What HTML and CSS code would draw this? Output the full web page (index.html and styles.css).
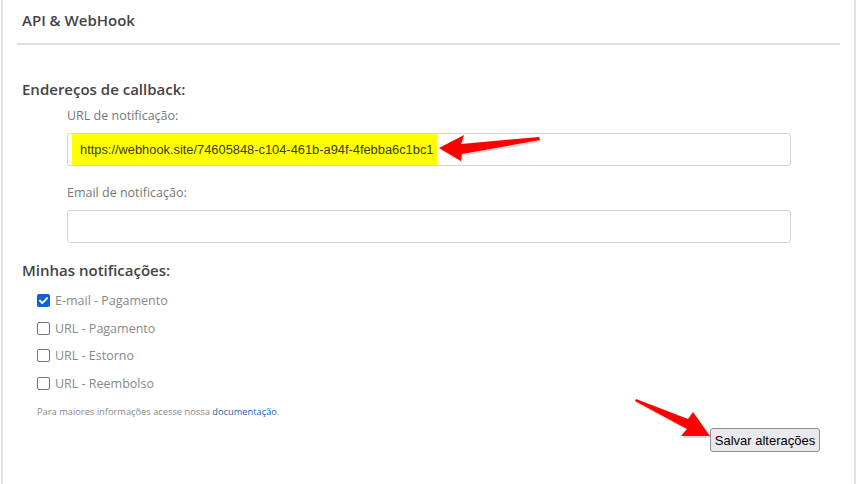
FILE: index.html
```html
<!DOCTYPE html>
<html lang="pt-BR">
<head>
    <meta charset="UTF-8">
    <meta name="viewport" content="width=device-width, initial-scale=1.0">
    <title>API &amp; WebHook</title>
    <link rel="stylesheet" href="styles.css">
</head>
<body>

    <div class="card">
        <!-- Cabeçalho do painel -->
        <div class="card-header">
            <h3>API &amp; WebHook</h3>
        </div>

        <div class="card-body">
            <h4 class="section-title">Endereços de callback:</h4>

            <div class="form-group">
                <label for="url-notif">URL de notificação:</label>
                <div class="input" id="url-notif">
                    <span class="marked">https://webhook.site/74605848-c104-461b-a94f-4febba6c1bc1</span>
                </div>
            </div>

            <div class="form-group">
                <label for="email-notif">Email de notificação:</label>
                <div class="input" id="email-notif"></div>
            </div>

            <h4 class="section-title second">Minhas notificações:</h4>

            <ul class="checks">
                <li><span class="box checked"><svg viewBox="0 0 13 13" width="13" height="13"><path d="M3 6.8l2.3 2.3 4.8-5" fill="none" stroke="#fff" stroke-width="2" stroke-linecap="round" stroke-linejoin="round"/></svg></span>E-mail - Pagamento</li>
                <li><span class="box"></span>URL - Pagamento</li>
                <li><span class="box"></span>URL - Estorno</li>
                <li><span class="box"></span>URL - Reembolso</li>
            </ul>

            <p class="help">Para maiores informações acesse nossa <a href="#">documentação</a>.</p>

            <div class="actions">
                <button type="button">Salvar alterações</button>
            </div>
        </div>

        <!-- Setas de destaque -->
        <svg class="arrow arrow-url" width="110" height="34" viewBox="0 0 110 34">
            <path d="M2 15 L27 2 L24 11 L102 4 L103 7 L25 21 L24 28 Z" fill="#333" opacity="0.18" transform="translate(1,2)"/>
            <path d="M2 15 L27 2 L24 11 L102 4 L103 7 L25 21 L24 28 Z" fill="#ff0000"/>
        </svg>
        <svg class="arrow arrow-btn" width="90" height="50" viewBox="0 0 90 50">
            <path d="M2 2 L3 0 L55 20 L60 13 L77 37 L48 37 L54 30 Z" fill="#333" opacity="0.18" transform="translate(1,2)"/>
            <path d="M2 2 L3 0 L55 20 L60 13 L77 37 L48 37 L54 30 Z" fill="#ff0000"/>
        </svg>
    </div>

</body>
</html>
```

FILE: styles.css
```css
body {
    margin: 0;
    background: #fff;
    font-family: "Open Sans", "Noto Sans", sans-serif;
    color: #555;
    overflow: hidden;
}
.card {
    position: relative;
    width: 855px;
    height: 484px;
    margin-left: 1px;
    border-left: 2px solid #e3e3e3;
    border-right: 2px solid #e3e3e3;
    box-sizing: border-box;
}
/* Cabeçalho */
.card-header {
    margin: 0 14px;
    height: 43px;
    border-bottom: 2px solid #dedede;
}
.card-header h3 {
    margin: 0;
    padding: 10px 0 0 5px;
    font-size: 15px;
    line-height: 20px;
    font-weight: 600;
    color: #444;
}
.card-body {
    padding: 0 34px 0 19px;
}
.section-title {
    margin: 34px 0 0;
    font-size: 15px;
    line-height: 20px;
    font-weight: 600;
    color: #444;
}
.section-title.second {
    margin-top: 17px;
}
/* Campos */
.form-group {
    margin: 0 29px 0 45px;
}
.form-group label {
    display: block;
    margin-top: 8px;
    font-size: 12.5px;
    line-height: 18px;
    color: #777;
}
.form-group + .form-group label {
    margin-top: 18px;
}
.input {
    margin-top: 8px;
    height: 31px;
    border: 1px solid #d4d4d4;
    border-radius: 3px;
    padding: 0 0 0 4px;
    display: flex;
    align-items: center;
}
.marked {
    display: block;
    background: #ffff00;
    height: 31px;
    line-height: 31px;
    padding: 0 4px 0 8px;
    font-family: "Liberation Sans", Arial, sans-serif;
    font-size: 12.85px;
    color: #3b3b1f;
}
/* Lista de notificações */
.checks {
    list-style: none;
    margin: 7px 0 0;
    padding: 0 0 0 15px;
}
.checks li {
    display: flex;
    align-items: center;
    height: 27.5px;
    font-size: 12.5px;
    color: #888;
}
.box {
    width: 11px;
    height: 11px;
    border: 1px solid #757575;
    border-radius: 2px;
    margin-right: 5px;
    display: flex;
    align-items: center;
    justify-content: center;
}
.box.checked {
    width: 13px;
    height: 13px;
    border: 0;
    background: #0b63db;
}
.help {
    margin: 9px 0 0 15px;
    font-size: 9.3px;
    line-height: 12px;
    color: #888;
}
.help a {
    color: #1a5fb4;
    text-decoration: none;
}
.actions {
    display: flex;
    justify-content: flex-end;
    margin-top: 10px;
}
.actions button {
    width: 110px;
    height: 24px;
    padding: 0;
    background: #e9e9ed;
    border: 1px solid #8f8f9d;
    border-radius: 3px;
    font-family: "Liberation Sans", Arial, sans-serif;
    font-size: 13px;
    color: #000;
}
/* Setas */
.arrow {
    position: absolute;
}
.arrow-url {
    left: 434px;
    top: 133px;
}
.arrow-btn {
    left: 630px;
    top: 399px;
}
```
